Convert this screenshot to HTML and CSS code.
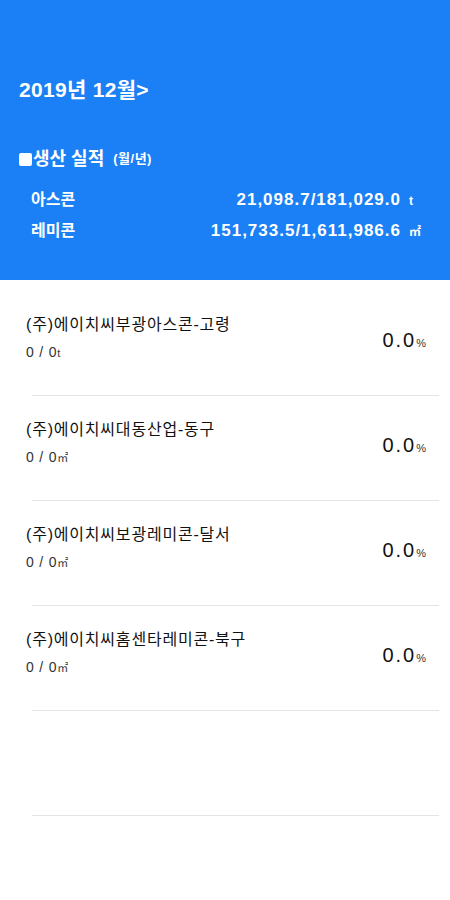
FILE: index.html
```html
<!DOCTYPE html>
<html lang="ko">
<head>
    <title>생산 실적</title>
    <meta charset="UTF-8">
    <meta name="viewport" content="width=device-width, initial-scale=1.0">
    <link rel="stylesheet" href="styles.css">
</head>
<body>
    <header class="summary">
        <div class="month">2019년 12월&gt;</div>
        <div class="section-title">
            <span class="square"></span>생산 실적 <small>(월/년)</small>
        </div>
        <div class="stat-row">
            <span class="stat-label">아스콘</span>
            <span class="stat-value">21,098.7/181,029.0</span>
            <span class="stat-unit">t</span>
        </div>
        <div class="stat-row">
            <span class="stat-label">레미콘</span>
            <span class="stat-value">151,733.5/1,611,986.6</span>
            <span class="stat-unit">㎡</span>
        </div>
    </header>

    <ul class="plant-list">
        <li class="plant">
            <div class="plant-info">
                <div class="plant-name">(주)에이치씨부광아스콘-고령</div>
                <div class="plant-amount">0 / 0<small>t</small></div>
            </div>
            <div class="plant-rate">0.0<small>%</small></div>
        </li>
        <li class="plant">
            <div class="plant-info">
                <div class="plant-name">(주)에이치씨대동산업-동구</div>
                <div class="plant-amount">0 / 0<small>㎡</small></div>
            </div>
            <div class="plant-rate">0.0<small>%</small></div>
        </li>
        <li class="plant">
            <div class="plant-info">
                <div class="plant-name">(주)에이치씨보광레미콘-달서</div>
                <div class="plant-amount">0 / 0<small>㎡</small></div>
            </div>
            <div class="plant-rate">0.0<small>%</small></div>
        </li>
        <li class="plant">
            <div class="plant-info">
                <div class="plant-name">(주)에이치씨홈센타레미콘-북구</div>
                <div class="plant-amount">0 / 0<small>㎡</small></div>
            </div>
            <div class="plant-rate">0.0<small>%</small></div>
        </li>
        <li class="plant empty"></li>
    </ul>
</body>
</html>
```

FILE: styles.css
```css
body {
    margin: 0;
    padding: 0;
    font-family: "Liberation Sans", "Noto Sans CJK KR", sans-serif;
    color: #111;
    background: #fff;
}
.summary {
    background-color: #1b7ff5;
    color: white;
    padding: 78px 25px 35px 19px;
    height: 280px;
    box-sizing: border-box;
}
.month {
    font-size: 21px;
    font-weight: bold;
    line-height: 24px;
    letter-spacing: 0.3px;
}
.section-title {
    margin-top: 45px;
    font-size: 18px;
    font-weight: bold;
    line-height: 24px;
    display: flex;
    align-items: center;
}
.section-title small {
    font-size: 13px;
    margin-left: 9px;
    letter-spacing: 0.5px;
}
.square {
    display: inline-block;
    width: 13px;
    height: 13px;
    background: white;
    border-radius: 2px;
    margin-right: 1px;
}
.section-title + .stat-row {
    margin-top: 14px;
}
.stat-row {
    display: flex;
    align-items: baseline;
    padding-left: 12px;
    line-height: 30px;
    font-size: 16px;
    font-weight: bold;
}
.stat-label {
    flex: 1;
}
.stat-value {
    font-size: 17px;
    letter-spacing: 1px;
}
.stat-unit {
    width: 16px;
    margin-left: 8px;
    font-size: 12px;
}
.plant-list {
    list-style: none;
    margin: 0;
    padding: 11px 0 0;
}
.plant {
    display: flex;
    align-items: flex-start;
    justify-content: space-between;
    height: 105px;
    padding: 24px 24px 0 26px;
    box-sizing: border-box;
    position: relative;
    border-bottom: 1px solid transparent;
}
.plant::after {
    content: "";
    position: absolute;
    left: 32px;
    right: 11px;
    bottom: -1px;
    border-bottom: 1px solid #e4e4e4;
}
.plant-name {
    font-size: 16px;
    line-height: 20px;
    letter-spacing: 0.8px;
    color: #111;
}
.plant-amount {
    margin-top: 7px;
    font-size: 14px;
    line-height: 20px;
    color: #333;
    letter-spacing: 0.8px;
}
.plant-amount small {
    font-size: 11px;
    letter-spacing: 0;
}
.plant-rate {
    margin-top: 13px;
    font-size: 20px;
    line-height: 24px;
    letter-spacing: 2px;
    color: #111;
}
.plant-rate small {
    font-size: 11px;
    letter-spacing: 0;
    color: #333;
}
```
